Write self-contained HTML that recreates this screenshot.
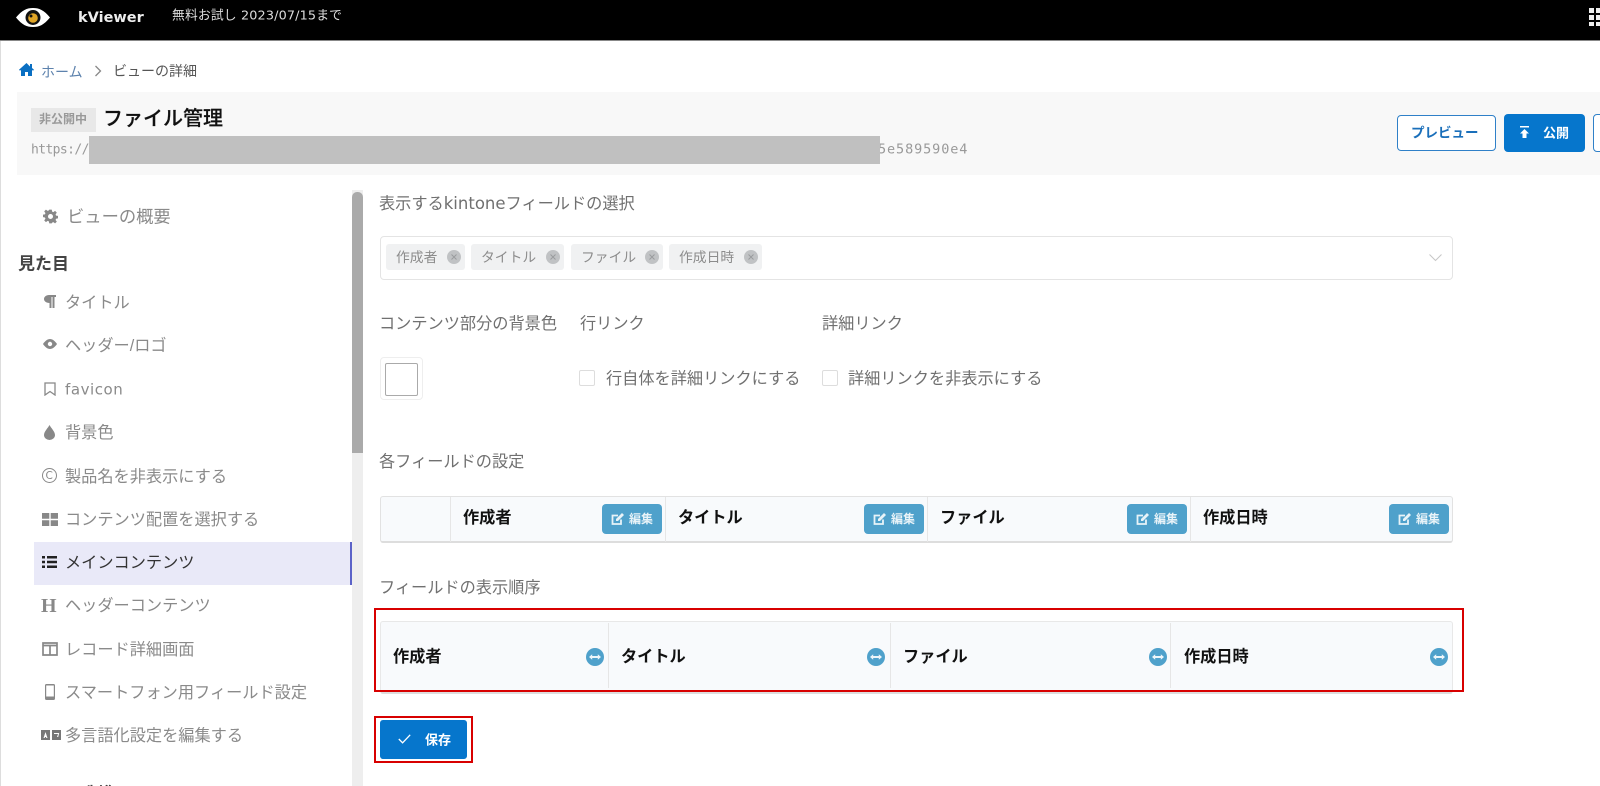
<!DOCTYPE html>
<html lang="ja"><head><meta charset="utf-8"><title>kViewer</title>
<style>
html,body{margin:0;padding:0;width:1600px;height:786px;overflow:hidden;background:#fff}
body{position:relative;font-family:"DejaVu Sans","Noto Sans CJK JP",sans-serif;color:#666}
.a{position:absolute;box-sizing:border-box}
.t{position:absolute;white-space:nowrap;line-height:1;transform:translateY(-50%)}
.j{font-family:"Liberation Sans","Noto Sans CJK JP",sans-serif;transform:translateY(calc(-50% + 1px))}
.s{font-size:16.200px;color:#8a8a8a;left:65px}
.s.j{transform:translateY(calc(-50% + 2px))}
.h{font-size:16.200px;font-weight:700;color:#111}
.l{font-size:16.200px;color:#707070}
.tag{position:absolute;top:244px;height:26px;background:#f0f1f2;border-radius:3px;box-sizing:border-box}
.tag span{position:absolute;left:10px;top:14px;transform:translateY(-50%);font-size:13.800px;line-height:1;color:#8c8c8c;white-space:nowrap;font-family:"Liberation Sans","Noto Sans CJK JP",sans-serif}
.x{position:absolute;right:4px;top:6px;width:14px;height:14px}
.ed{position:absolute;top:504px;width:60px;height:30px;background:#4fa1cb;border-radius:4px;transform:none}
.ed svg{position:absolute;left:9px;top:8px}
.ed b{position:absolute;left:27px;top:7px;font-size:12px;line-height:16px;color:#e8f3f8;white-space:nowrap}
.sw{position:absolute;top:648px;width:18px;height:18px}
.v{position:absolute;width:1px;background:#e6e6e6}
svg{display:block}
.ic{position:absolute}
</style></head><body>

<div class="a" style="left:0;top:0;width:1600px;height:40px;background:#000"></div>
<div class="a" style="left:0;top:40px;width:1600px;height:1px;background:#888"></div>
<div class="a" style="left:0;top:41px;width:1px;height:745px;background:#ddd"></div>
<svg class="ic" style="left:15px;top:7px" width="36" height="21" viewBox="0 0 36 21"><path d="M1 10.500C7 3 12 1 18 1s11 2 17 9.500C29 18 24 20 18 20S7 18 1 10.500z" fill="#fff"/><circle cx="18" cy="10.500" r="7.500" fill="#111"/><circle cx="18" cy="11" r="4.800" fill="#e0a526"/><circle cx="16" cy="9" r="1.500" fill="#111"/></svg>
<div class="t" style="left:78px;top:18px;font-size:14.500px;font-weight:700;color:#eee">kViewer</div>
<div class="t" style="left:172px;top:17px;font-size:12.800px;color:#ddd;letter-spacing:.15px">無料お試し 2023/07/15まで</div>
<svg class="ic" style="left:1589px;top:8px" width="11" height="18"><path fill="#eee" d="M0 0h5v5H0zM7 0h4v5H7zM0 7h5v5H0zM7 7h4v5H7zM0 14h5v4H0zM7 14h4v4H7z"/></svg>

<svg class="ic" style="left:19px;top:63px" width="15" height="13" viewBox="0 0 15 13"><path fill="#0a6fc2" d="M7.500 0L0 6.800l1 1 1-.9V13h4V9h3v4h4V6.900l1 .9 1-1-2-1.800V1h-2v2.500z"/></svg>
<div class="t j" style="left:41px;top:71px;font-size:14px;color:#5d82ad">ホーム</div>
<svg class="ic" style="left:94px;top:65px" width="8" height="12"><path d="M1.500 1l5 5-5 5" fill="none" stroke="#888" stroke-width="1.300"/></svg>
<div class="t j" style="left:113px;top:70px;font-size:14px;color:#555">ビューの詳細</div>

<div class="a" style="left:17px;top:92px;width:1583px;height:83px;background:#f8f8f8"></div>
<div class="a" style="left:31px;top:108px;width:65px;height:24px;background:#e8e8e8"></div>
<div class="t j" style="left:39px;top:118px;font-size:12px;font-weight:700;color:#999">非公開中</div>
<div class="t j" style="left:103px;top:118px;font-size:20px;font-weight:500;color:#111;-webkit-text-stroke:.2px #111">ファイル管理</div>
<div class="t" style="left:31px;top:150px;font-family:'DejaVu Sans Mono',monospace;font-size:13px;letter-spacing:-.6px;color:#999">https://</div>
<div class="a" style="left:879px;top:140px;width:92px;height:20px;overflow:hidden"><div class="t" style="left:-1px;top:10px;font-family:'DejaVu Sans Mono',monospace;font-size:13.500px;letter-spacing:.9px;color:#999">5e589590e4</div></div>
<div class="a" style="left:89px;top:136px;width:791px;height:28px;background:#c0c0c0"></div>

<div class="a" style="left:1397px;top:115px;width:99px;height:36px;background:#fff;border:1px solid #2f80c8;border-radius:4px"></div>
<div class="t j" style="left:1411px;top:132px;font-size:13.500px;font-weight:700;color:#1a6fba">プレビュー</div>
<div class="a" style="left:1504px;top:114px;width:81px;height:38px;background:#0676cc;border-radius:4px"></div>
<svg class="ic" style="left:1519px;top:126px" width="11" height="12"><path fill="#fff" d="M1 0h9v1.500H1zM5.500 3L10 7.500H7.500V12h-4V7.500H1z"/></svg>
<div class="t j" style="left:1543px;top:132px;font-size:13px;font-weight:700;color:#fff">公開</div>
<div class="a" style="left:1593px;top:114px;width:20px;height:38px;background:#fff;border:1px solid #2f80c8;border-radius:4px"></div>

<!-- sidebar -->
<div class="a" style="left:352px;top:190px;width:11px;height:596px;background:#eee"></div>
<div class="a" style="left:352px;top:192px;width:11px;height:261px;background:#aaa;border-radius:5px 5px 0 0"></div>

<svg class="ic" style="left:43px;top:209px" width="15" height="15" viewBox="0 0 24 24"><path fill="#888" d="M10 1h4l.6 3.200 2 .8L19.300 3l2.800 2.800-2 2.700.8 2L24 11v4l-3.100.5-.8 2 2 2.700-2.800 2.800-2.700-2-2 .8L14 23h-4l-.6-3.200-2-.8-2.700 2-2.800-2.800 2-2.700-.8-2L0 13v-4l3.100-.5.8-2-2-2.700L4.700 1l2.700 2 2-.8zM12 8a4 4 0 100 8 4 4 0 000-8z" fill-rule="evenodd"/></svg>
<div class="t s j" style="left:67px;top:215px;font-size:17.300px">ビューの概要</div>
<div class="t j" style="left:18px;top:263px;font-size:17px;font-weight:700;color:#444">見た目</div>

<svg class="ic" style="left:44px;top:295px" width="12" height="13"><path fill="#888" d="M5 0h7v2h-1.500v11H8.500V2H7.500v11H5.500V8C2 8 0 6 0 4s2-4 5-4z"/></svg>
<div class="t s j" style="top:301px">タイトル</div>
<svg class="ic" style="left:43px;top:339px" width="14" height="10"><path fill="#888" fill-rule="evenodd" d="M0 5C2 2 4.500 0 7 0s5 2 7 5c-2 3-4.500 5-7 5S2 8 0 5zm7-2.200a2.200 2.200 0 100 4.400 2.200 2.200 0 000-4.400z"/></svg>
<div class="t s j" style="top:344px">ヘッダー/ロゴ</div>
<svg class="ic" style="left:44px;top:382px" width="12" height="14"><path d="M1 1h10v12L6 9.500 1 13z" fill="none" stroke="#888" stroke-width="1.300"/></svg>
<div class="t s" style="top:390px;font-size:15px;letter-spacing:.55px">favicon</div>
<svg class="ic" style="left:44px;top:425px" width="11" height="15"><path fill="#888" d="M5.500 0C7 3 11 6.500 11 10a5.500 5 0 01-11 0C0 6.500 4 3 5.500 0z"/></svg>
<div class="t s j" style="top:431px">背景色</div>
<div class="a" style="left:42px;top:468px;width:15px;height:15px;border:1.300px solid #888;border-radius:50%"></div>
<div class="t" style="left:45.500px;top:475.500px;font-size:10.500px;color:#888">C</div>
<div class="t s j" style="top:475px">製品名を非表示にする</div>
<svg class="ic" style="left:42px;top:513px" width="16" height="13"><path fill="#888" d="M0 0h7.300v5.800H0zM8.700 0H16v5.800H8.700zM0 7.200h7.300V13H0zM8.700 7.200H16V13H8.700z"/></svg>
<div class="t s j" style="top:518px">コンテンツ配置を選択する</div>

<div class="a" style="left:34px;top:542px;width:318px;height:43px;background:#e9e9f8;border-right:2px solid #5c63c8"></div>
<svg class="ic" style="left:42px;top:556px" width="15" height="12"><path fill="#222" d="M0 0h3v2.500H0zM5 0h10v2.500H5zM0 4.700h3v2.500H0zM5 4.700h10v2.500H5zM0 9.500h3V12H0zM5 9.500h10V12H5z"/></svg>
<div class="t s j" style="top:561px;color:#333">メインコンテンツ</div>

<div class="t" style="left:41px;top:606px;font-family:'Liberation Serif',serif;font-size:20px;font-weight:700;color:#888">H</div>
<div class="t s j" style="top:604px">ヘッダーコンテンツ</div>
<svg class="ic" style="left:42px;top:642px" width="16" height="14"><path d="M1 1h14v12H1zM8 3.500V13M1 3.500h14" fill="none" stroke="#888" stroke-width="1.700"/></svg>
<div class="t s j" style="top:648px">レコード詳細画面</div>
<svg class="ic" style="left:45px;top:684px" width="10" height="16"><path fill="#888" fill-rule="evenodd" d="M1.500 0h7A1.500 1.500 0 0110 1.500v13A1.500 1.500 0 018.500 16h-7A1.500 1.500 0 010 14.500v-13A1.500 1.500 0 011.500 0zM1.200 1.500V12.500h7.600V1.500z"/></svg>
<div class="t s j" style="top:691px">スマートフォン用フィールド設定</div>
<svg class="ic" style="left:41px;top:730px" width="20" height="10"><path fill="#777" fill-rule="evenodd" d="M0 0h9v10H0zM4.500 2L2.500 8h1.200l.3-1h1l.3 1h1.200zM11 0h9v10h-9zM13 3v1h4l-1 3h1.200l1-4z"/></svg>
<div class="t s j" style="top:734px">多言語化設定を編集する</div>
<div class="t j" style="left:18px;top:793px;font-size:17px;font-weight:700;color:#444">レコード制御</div>

<!-- main -->
<div class="t j l" style="left:379px;top:203px">表示する<span style="font-family:'DejaVu Sans';font-size:16.500px">kintone</span>フィールドの選択</div>
<div class="a" style="left:380px;top:236px;width:1073px;height:44px;border:1px solid #e4e4e4;border-radius:4px"></div>
<div class="tag" style="left:386px;width:79px"><span>作成者</span><svg class="x" viewBox="0 0 14 14"><circle cx="7" cy="7" r="7" fill="#c0c2c4"/><path d="M4.500 4.500l5 5M9.500 4.500l-5 5" stroke="#9a9c9e" stroke-width="1"/></svg></div>
<div class="tag" style="left:471px;width:93px"><span>タイトル</span><svg class="x" viewBox="0 0 14 14"><circle cx="7" cy="7" r="7" fill="#c0c2c4"/><path d="M4.500 4.500l5 5M9.500 4.500l-5 5" stroke="#9a9c9e" stroke-width="1"/></svg></div>
<div class="tag" style="left:571px;width:92px"><span>ファイル</span><svg class="x" viewBox="0 0 14 14"><circle cx="7" cy="7" r="7" fill="#c0c2c4"/><path d="M4.500 4.500l5 5M9.500 4.500l-5 5" stroke="#9a9c9e" stroke-width="1"/></svg></div>
<div class="tag" style="left:669px;width:93px"><span>作成日時</span><svg class="x" viewBox="0 0 14 14"><circle cx="7" cy="7" r="7" fill="#c0c2c4"/><path d="M4.500 4.500l5 5M9.500 4.500l-5 5" stroke="#9a9c9e" stroke-width="1"/></svg></div>
<svg class="ic" style="left:1429px;top:254px" width="13" height="8"><path d="M.5.500l6 6 6-6" fill="none" stroke="#c8c8c8" stroke-width="1.100"/></svg>

<div class="t j l" style="left:379px;top:323px">コンテンツ部分の背景色</div>
<div class="t j l" style="left:580px;top:323px">行リンク</div>
<div class="t j l" style="left:822px;top:323px">詳細リンク</div>
<div class="a" style="left:380px;top:357px;width:43px;height:43px;border:1px solid #eee;border-radius:4px"></div>
<div class="a" style="left:385px;top:363px;width:33px;height:33px;border:1px solid #aaa;border-radius:2px"></div>
<div class="a" style="left:579px;top:370px;width:16px;height:16px;border:1px solid #ddd;border-radius:2px"></div>
<div class="t j l" style="left:606px;top:378px">行自体を詳細リンクにする</div>
<div class="a" style="left:822px;top:370px;width:16px;height:16px;border:1px solid #ddd;border-radius:2px"></div>
<div class="t j l" style="left:848px;top:378px">詳細リンクを非表示にする</div>
<div class="t j l" style="left:379px;top:461px">各フィールドの設定</div>

<div class="a" style="left:380px;top:496px;width:1073px;height:47px;background:#f8fafc;border:1px solid #e2e2e2;border-bottom:2px solid #ddd;border-radius:3px"></div>
<div class="v" style="left:450px;top:497px;height:45px"></div>
<div class="v" style="left:665px;top:497px;height:45px"></div>
<div class="v" style="left:927px;top:497px;height:45px"></div>
<div class="v" style="left:1190px;top:497px;height:45px"></div>
<div class="t j h" style="left:463px;top:517px">作成者</div>
<div class="t j h" style="left:678px;top:517px">タイトル</div>
<div class="t j h" style="left:940px;top:517px">ファイル</div>
<div class="t j h" style="left:1203px;top:517px">作成日時</div>
<div class="ed j" style="left:602px"><svg width="14" height="14" viewBox="0 0 14 14"><path d="M10 7.500V12H1.500V3.500H7" fill="none" stroke="#e8f3f8" stroke-width="1.800"/><path d="M5 7l6-6 2 2-6 6H5z" fill="#e8f3f8"/></svg><b>編集</b></div>
<div class="ed j" style="left:864px"><svg width="14" height="14" viewBox="0 0 14 14"><path d="M10 7.500V12H1.500V3.500H7" fill="none" stroke="#e8f3f8" stroke-width="1.800"/><path d="M5 7l6-6 2 2-6 6H5z" fill="#e8f3f8"/></svg><b>編集</b></div>
<div class="ed j" style="left:1127px"><svg width="14" height="14" viewBox="0 0 14 14"><path d="M10 7.500V12H1.500V3.500H7" fill="none" stroke="#e8f3f8" stroke-width="1.800"/><path d="M5 7l6-6 2 2-6 6H5z" fill="#e8f3f8"/></svg><b>編集</b></div>
<div class="ed j" style="left:1389px"><svg width="14" height="14" viewBox="0 0 14 14"><path d="M10 7.500V12H1.500V3.500H7" fill="none" stroke="#e8f3f8" stroke-width="1.800"/><path d="M5 7l6-6 2 2-6 6H5z" fill="#e8f3f8"/></svg><b>編集</b></div>

<div class="t j l" style="left:379px;top:587px">フィールドの表示順序</div>

<div class="a" style="left:380px;top:621px;width:1073px;height:73px;background:#f8fafc;border:1px solid #e8e8e8;border-bottom:2px solid #ddd;border-radius:3px"></div>
<div class="v" style="left:608px;top:623px;height:65px"></div>
<div class="v" style="left:890px;top:623px;height:65px"></div>
<div class="v" style="left:1170px;top:623px;height:65px"></div>
<div class="t j h" style="left:393px;top:656px">作成者</div>
<div class="t j h" style="left:621px;top:656px">タイトル</div>
<div class="t j h" style="left:903px;top:656px">ファイル</div>
<div class="t j h" style="left:1184px;top:656px">作成日時</div>
<svg class="sw" style="left:586px" viewBox="0 0 18 18"><circle cx="9" cy="9" r="9" fill="#4fa1cb"/><path d="M3 9l3.200-2.800v1.800h5.600V6.200L15 9l-3.200 2.800V10H6.200v1.800z" fill="#eef6fa"/></svg>
<svg class="sw" style="left:867px" viewBox="0 0 18 18"><circle cx="9" cy="9" r="9" fill="#4fa1cb"/><path d="M3 9l3.200-2.800v1.800h5.600V6.200L15 9l-3.200 2.800V10H6.200v1.800z" fill="#eef6fa"/></svg>
<svg class="sw" style="left:1149px" viewBox="0 0 18 18"><circle cx="9" cy="9" r="9" fill="#4fa1cb"/><path d="M3 9l3.200-2.800v1.800h5.600V6.200L15 9l-3.200 2.800V10H6.200v1.800z" fill="#eef6fa"/></svg>
<svg class="sw" style="left:1430px" viewBox="0 0 18 18"><circle cx="9" cy="9" r="9" fill="#4fa1cb"/><path d="M3 9l3.200-2.800v1.800h5.600V6.200L15 9l-3.200 2.800V10H6.200v1.800z" fill="#eef6fa"/></svg>
<div class="a" style="left:374px;top:608px;width:1090px;height:84px;border:2px solid #d80000"></div>

<div class="a" style="left:374px;top:716px;width:99px;height:47px;border:2px solid #d80000"></div>
<div class="a" style="left:380px;top:720px;width:87px;height:39px;background:#0676cc;border-radius:3px"></div>
<svg class="ic" style="left:398px;top:734px" width="13" height="10"><path d="M.8 5l3.800 3.800L12.200.8" fill="none" stroke="#fff" stroke-width="1.300"/></svg>
<div class="t j" style="left:425px;top:739px;font-size:13px;font-weight:700;color:#fff">保存</div>
</body></html>
